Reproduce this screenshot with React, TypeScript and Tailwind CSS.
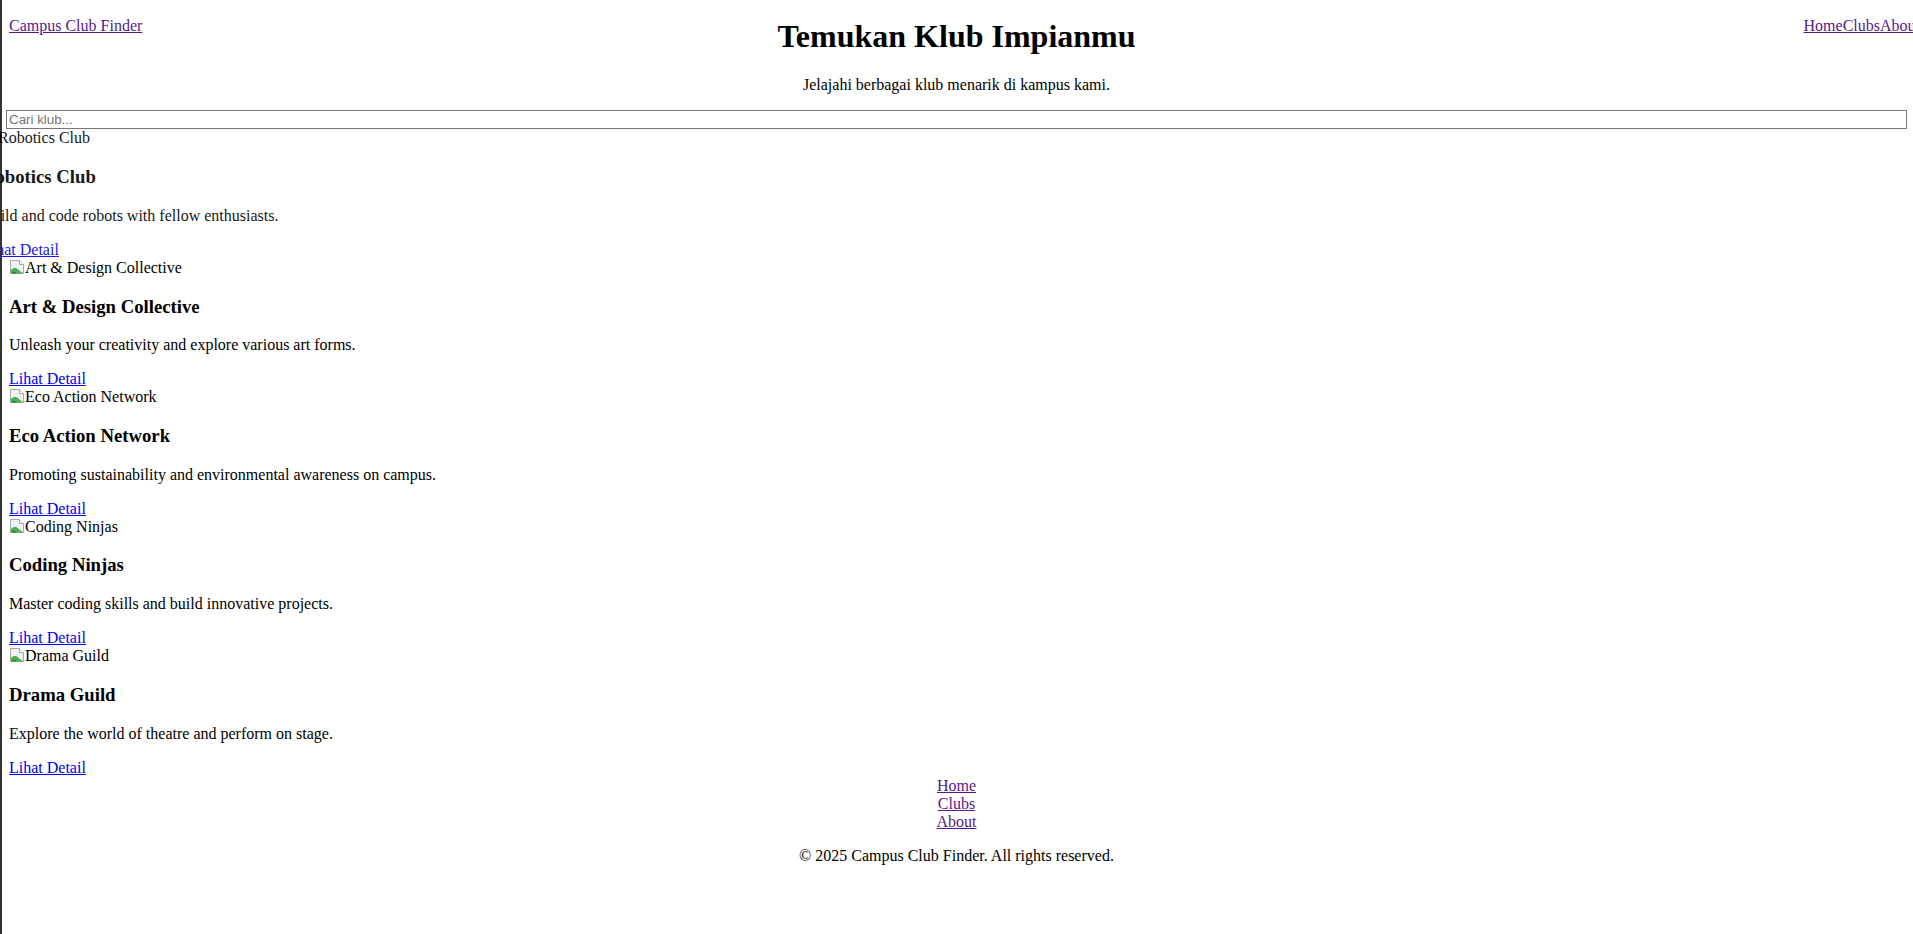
import React from "react";

type Club = { name: string; desc: string };

const clubs: Club[] = [
  { name: "Robotics Club", desc: "Build and code robots with fellow enthusiasts." },
  { name: "Art & Design Collective", desc: "Unleash your creativity and explore various art forms." },
  { name: "Eco Action Network", desc: "Promoting sustainability and environmental awareness on campus." },
  { name: "Coding Ninjas", desc: "Master coding skills and build innovative projects." },
  { name: "Drama Guild", desc: "Explore the world of theatre and perform on stage." },
];

function BrokenImage() {
  return (
    <svg width="16" height="16" viewBox="0 0 16 16" className="inline-block align-[-2px]">
      <path d="M1.5 1.5h9l4 4v9h-13z" fill="#eef3f8" stroke="#a8a8a8" />
      <path d="M10.5 1.5v4h4" fill="#ffffff" stroke="#a8a8a8" />
      <path d="M2 14.5V11c2-2 4-2.5 6-1.5l3 2.5 3.5 2.5z" fill="#4caf50" />
      <path d="M2 14.5l3-2 3 2z" fill="#2e7d32" />
    </svg>
  );
}

function ClubCard({ club, first }: { club: Club; first?: boolean }) {
  return (
    <div className={first ? "-translate-x-[27px] opacity-90" : ""}>
      <span>
        <BrokenImage />
        {club.name}
      </span>
      <h3 className="text-[18.72px] font-bold my-[18.72px]">{club.name}</h3>
      <p className="my-4">{club.desc}</p>
      <a href="#" className="text-[#0000ee] underline">
        Lihat Detail
      </a>
    </div>
  );
}

export default function App() {
  return (
    <div
      className="min-h-screen overflow-hidden bg-white pt-[1px] text-black text-[16px] leading-[normal] shadow-[inset_2px_0_0_#333]"
      style={{ fontFamily: '"Liberation Serif", "Times New Roman", serif' }}
    >
      <header className="grid grid-cols-[1fr_auto_1fr] items-start">
        <div className="mt-[16px] pl-[9px]">
          <a href="#" className="text-[#551a8b] underline">
            Campus Club Finder
          </a>
        </div>
        <div className="text-center">
          <h1 className="text-[32px] font-bold mt-[17px] mb-[21.44px]">Temukan Klub Impianmu</h1>
          <p className="mb-4">Jelajahi berbagai klub menarik di kampus kami.</p>
        </div>
        <nav className="mt-[16px] flex justify-end -mr-[7px]">
          <a href="#" className="text-[#551a8b] underline">Home</a>
          <a href="#" className="text-[#551a8b] underline">Clubs</a>
          <a href="#" className="text-[#551a8b] underline">About</a>
        </nav>
      </header>

      <div className="pl-[6px]">
        <input
          type="text"
          placeholder="Cari klub..."
          className="block w-[1901px] h-[19px] border border-[#767676] px-[2px] text-[13.33px] placeholder:text-[#757575] outline-none"
          style={{ fontFamily: '"Liberation Sans", Arial, sans-serif' }}
        />
      </div>

      <main className="pl-[9px]">
        {clubs.map((c, i) => (
          <ClubCard key={c.name} club={c} first={i === 0} />
        ))}
      </main>

      <footer className="text-center">
        <nav className="flex flex-col items-center">
          <a href="#" className="text-[#551a8b] underline">Home</a>
          <a href="#" className="text-[#551a8b] underline">Clubs</a>
          <a href="#" className="text-[#551a8b] underline">About</a>
        </nav>
        <p className="my-4">© 2025 Campus Club Finder. All rights reserved.</p>
      </footer>
    </div>
  );
}
